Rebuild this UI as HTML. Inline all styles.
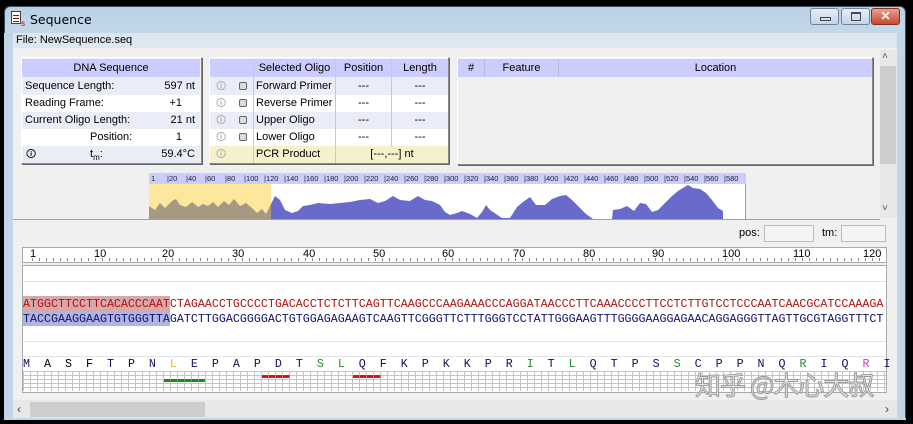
<!DOCTYPE html>
<html><head><meta charset="utf-8"><style>
*{margin:0;padding:0;box-sizing:border-box}
body{width:913px;height:424px;background:#000;position:relative;overflow:hidden;font-family:"Liberation Sans",Arial,sans-serif;font-size:11px;color:#000}
.a{position:absolute}
.win{left:4px;top:6px;width:902px;height:414px;background:linear-gradient(#b9d0e6,#c6d9ea 30px,#c3d6e8);border-radius:6px 6px 0 0;border:1px solid #3c4b5a}
.cell{position:absolute;white-space:nowrap;line-height:17px}
.hdr{background:#ccccff;color:#000;text-align:center;line-height:18px}
.mono{font-family:"Liberation Mono","Courier New",monospace;font-size:11.667px;white-space:pre}
.tb{position:absolute;top:8px;height:17px;border:1px solid #6f839a;border-radius:3px;background:linear-gradient(#e6eef7,#c4d4e6)}
</style></head><body>
<div class="a win"></div>
<div class="a" style="left:11px;top:11px;width:10px;height:13px;background:#fff;border:1px solid #444"></div>
<div class="a" style="left:13px;top:15px;width:6px;height:1px;background:#a00;box-shadow:0 3px 0 #a00,0 6px 0 #a00"></div>
<div class="a" style="left:21px;top:19px;font-size:8px;color:#c00">s</div>
<div class="a" style="left:30px;top:12px;font-size:12.5px;font-family:'DejaVu Sans',sans-serif">Sequence</div>
<div class="tb" style="left:810px;width:29px"><div class="a" style="left:9px;top:8px;width:11px;height:4px;border:1px solid #445"></div></div>
<div class="tb" style="left:841px;width:29px"><div class="a" style="left:9px;top:3px;width:10px;height:9px;border:1px solid #445;border-top-width:2px"></div></div>
<div class="tb" style="left:871px;width:29px;background:linear-gradient(#e8a090,#c84a30);border-color:#8a3020;color:#fff;text-align:center;font-weight:bold;font-size:12px;line-height:15px">✕</div>
<div class="a" style="left:13px;top:33px;width:884px;height:15px;background:#dde7ef"></div>
<div class="a" style="left:16px;top:34px;font-size:11px">File: NewSequence.seq</div>
<div class="a" style="left:13px;top:48px;width:884px;height:370px;background:#f0f0f0"></div>
<div class="a" style="left:897px;top:33px;width:8px;height:387px;background:#c3d6e8"></div>
<div class="a" style="left:4px;top:33px;width:9px;height:387px;background:#c3d6e8"></div>
<div class="a" style="left:4px;top:418px;width:902px;height:2px;background:#c3d6e8"></div>
<!-- DNA panel -->
<div class="a" style="left:21px;top:57px;width:181px;height:107px;border:1px solid #fff;border-right-color:#888;border-bottom-color:#888;box-shadow:1px 1px 0 #666"></div>
<div class="a hdr" style="left:22px;top:59px;width:178px;height:18px">DNA Sequence</div>
<div class="a" style="left:22px;top:78px;width:178px;height:17px;background:#e8edf7"></div>
<div class="a" style="left:22px;top:95px;width:178px;height:17px;background:#fff"></div>
<div class="a" style="left:22px;top:112px;width:178px;height:17px;background:#e8edf7"></div>
<div class="a" style="left:22px;top:129px;width:178px;height:17px;background:#fff"></div>
<div class="a" style="left:22px;top:146px;width:178px;height:17px;background:#e8edf7"></div>
<div class="cell" style="left:25px;top:78px">Sequence Length:</div><div class="cell" style="left:140px;top:78px;width:55px;text-align:right">597 nt</div>
<div class="cell" style="left:25px;top:95px">Reading Frame:</div><div class="cell" style="left:140px;top:95px;width:42px;text-align:right">+1</div>
<div class="cell" style="left:25px;top:112px">Current Oligo Length:</div><div class="cell" style="left:140px;top:112px;width:55px;text-align:right">21 nt</div>
<div class="cell" style="left:90px;top:129px">Position:</div><div class="cell" style="left:140px;top:129px;width:42px;text-align:right">1</div>
<div class="cell" style="left:26px;top:146px;font-size:10px">&#x1F6C8;</div>
<div class="cell" style="left:90px;top:146px">t<sub style="font-size:8px">m</sub>:</div><div class="cell" style="left:140px;top:146px;width:55px;text-align:right">59.4°C</div>
<!-- Oligo panel -->
<div class="a" style="left:209px;top:57px;width:240px;height:107px;border:1px solid #fff;border-right-color:#888;border-bottom-color:#888;box-shadow:1px 1px 0 #666"></div>
<div class="a hdr" style="left:210px;top:59px;width:238px;height:18px"></div>
<div class="a" style="left:210px;top:78px;width:238px;height:17px;background:#e8edf7"></div>
<div class="a" style="left:210px;top:95px;width:238px;height:17px;background:#fff"></div>
<div class="a" style="left:210px;top:112px;width:238px;height:17px;background:#e8edf7"></div>
<div class="a" style="left:210px;top:129px;width:238px;height:17px;background:#fff"></div>
<div class="a" style="left:210px;top:146px;width:238px;height:17px;background:#f7f0cc"></div>
<div class="a" style="left:253px;top:59px;width:1px;height:104px;background:#c8c8d8"></div>
<div class="a" style="left:335px;top:59px;width:1px;height:104px;background:#c8c8d8"></div>
<div class="a" style="left:391px;top:59px;width:1px;height:87px;background:#c8c8d8"></div>
<div class="cell hdr" style="left:254px;top:59px;width:81px;background:none">Selected Oligo</div>
<div class="cell hdr" style="left:336px;top:59px;width:55px;background:none">Position</div>
<div class="cell hdr" style="left:392px;top:59px;width:56px;background:none">Length</div>
<div class="cell" style="left:256px;top:78px">Forward Primer</div>
<div class="cell" style="left:256px;top:95px">Reverse Primer</div>
<div class="cell" style="left:256px;top:112px">Upper Oligo</div>
<div class="cell" style="left:256px;top:129px">Lower Oligo</div>
<div class="cell" style="left:256px;top:146px">PCR Product</div>
<div class="cell" style="left:336px;top:78px;width:55px;text-align:center">---<br>---<br>---<br>---</div>
<div class="cell" style="left:392px;top:78px;width:56px;text-align:center">---<br>---<br>---<br>---</div>
<div class="cell" style="left:336px;top:146px;width:112px;text-align:center">[---,---] nt</div>
<div class="cell" style="left:216px;top:78px;color:#aaa;font-size:10px;line-height:17px">&#x1F6C8;<br>&#x1F6C8;<br>&#x1F6C8;<br>&#x1F6C8;<br>&#x1F6C8;</div>
<div class="a" style="left:239px;top:82px;width:8px;height:8px;border:1px solid #666;border-radius:2px;background:#ddd"></div>
<div class="a" style="left:239px;top:99px;width:8px;height:8px;border:1px solid #666;border-radius:2px;background:#ddd"></div>
<div class="a" style="left:239px;top:116px;width:8px;height:8px;border:1px solid #666;border-radius:2px;background:#ddd"></div>
<div class="a" style="left:239px;top:133px;width:8px;height:8px;border:1px solid #666;border-radius:2px;background:#ddd"></div>
<!-- Features panel -->
<div class="a" style="left:457px;top:57px;width:416px;height:108px;border:1px solid #fff;border-right-color:#888;border-bottom-color:#888;box-shadow:1px 1px 0 #666"></div>
<div class="a hdr" style="left:458px;top:59px;width:414px;height:18px"></div>
<div class="a" style="left:484px;top:59px;width:1px;height:18px;background:#b8b8d8"></div>
<div class="a" style="left:558px;top:59px;width:1px;height:18px;background:#b8b8d8"></div>
<div class="cell hdr" style="left:458px;top:59px;width:26px;background:none">#</div>
<div class="cell hdr" style="left:485px;top:59px;width:73px;background:none">Feature</div>
<div class="cell hdr" style="left:559px;top:59px;width:313px;background:none">Location</div>
<!-- right scrollbar -->
<div class="a" style="left:880px;top:50px;width:17px;height:168px;background:#e8e8e8"></div>
<div class="a" style="left:880px;top:66px;width:16px;height:98px;background:#cdcdcd"></div>
<div class="a" style="left:882px;top:51px;font-size:10px;color:#555">&#x2C4;</div>
<div class="a" style="left:882px;top:203px;font-size:10px;color:#555">&#x2C5;</div>
<!-- graph -->
<div class="a" style="left:149px;top:173px;width:597px;height:11px;background:#ccccff;font-size:7.5px;line-height:11px;color:#223">
<span class="a" style="left:2px">1</span><span class="a" style="left:18px">|20</span><span class="a" style="left:37px">|40</span><span class="a" style="left:56px">|60</span><span class="a" style="left:76px">|80</span><span class="a" style="left:95px">|100</span><span class="a" style="left:115px">|120</span><span class="a" style="left:135px">|140</span><span class="a" style="left:155px">|160</span><span class="a" style="left:175px">|180</span><span class="a" style="left:195px">|200</span><span class="a" style="left:215px">|220</span><span class="a" style="left:235px">|240</span><span class="a" style="left:255px">|260</span><span class="a" style="left:275px">|280</span><span class="a" style="left:295px">|300</span><span class="a" style="left:315px">|320</span><span class="a" style="left:335px">|340</span><span class="a" style="left:355px">|360</span><span class="a" style="left:375px">|380</span><span class="a" style="left:395px">|400</span><span class="a" style="left:415px">|420</span><span class="a" style="left:435px">|440</span><span class="a" style="left:455px">|460</span><span class="a" style="left:475px">|480</span><span class="a" style="left:495px">|500</span><span class="a" style="left:515px">|520</span><span class="a" style="left:535px">|540</span><span class="a" style="left:555px">|560</span><span class="a" style="left:575px">|580</span></div>
<svg class="a" style="left:149px;top:184px" width="597" height="35" viewBox="149 184 597 35">
<rect x="149" y="184" width="596" height="35" fill="#fff"/>
<rect x="149" y="184" width="122" height="35" fill="#fde79c"/>
<polygon fill="#a69984" points="149,219 149,206 155,210 160,203 165,208 172,201 176,199 180,205 186,207 192,202 198,207 203,204 208,206 213,202 218,207 224,201 229,205 234,199 240,206 246,203 252,208 257,213 262,209 266,214 271,204 271,219"/>
<polygon fill="#6a6acc" points="271,219 271,204 275,196 280,200 285,210 292,213 298,211 303,206 310,205 318,203 330,204 340,203 350,202 360,200 370,199 378,203 385,201 393,196 400,200 410,201 418,196 425,200 432,201 440,205 445,212 450,215 457,213 462,211 470,214 477,218 482,212 486,205 490,210 496,214 502,218 510,218 517,207 523,202 530,197 536,205 545,205 552,199 560,196 566,195 572,200 580,208 586,214 593,219"/>
<polygon fill="#6a6acc" points="612,219 613,210 620,209 627,206 634,211 640,203 646,204 652,212 658,210 665,203 672,196 678,191 683,188 688,185 693,188 700,189 706,193 712,200 718,208 723,211 723,219"/>
<line x1="745.5" y1="184" x2="745.5" y2="219" stroke="#999"/>
</svg>
<div class="a" style="left:13px;top:219px;width:867px;height:1px;background:#a0a0a0"></div>
<!-- pos / tm -->
<div class="a" style="left:739px;top:227px;font-size:11px">pos:</div>
<div class="a" style="left:764px;top:225px;width:50px;height:17px;border:1px solid #bbb;background:#f4f4f4"></div>
<div class="a" style="left:822px;top:227px;font-size:11px">tm:</div>
<div class="a" style="left:841px;top:225px;width:45px;height:17px;border:1px solid #bbb;background:#f4f4f4"></div>
<!-- ruler -->
<div class="a" style="left:22px;top:247px;width:865px;height:16px;background:#fff;border:1px solid #aaa"></div>
<div class="a" style="left:22px;top:247px;width:865px;height:16px;background:repeating-linear-gradient(90deg,transparent 0 6px,#888 6px 7px) 4px 11px/860px 3px no-repeat"></div>
<div class="a" style="left:22px;top:248px;font-size:11px;line-height:12px;width:865px;height:14px">
<span class="a" style="left:8px">1</span><span class="a" style="left:72px">10</span><span class="a" style="left:140px">20</span><span class="a" style="left:210px">30</span><span class="a" style="left:281px">40</span><span class="a" style="left:351px">50</span><span class="a" style="left:420px">60</span><span class="a" style="left:491px">70</span><span class="a" style="left:561px">80</span><span class="a" style="left:630px">90</span><span class="a" style="left:700px">100</span><span class="a" style="left:771px">110</span><span class="a" style="left:841px">120</span></div>
<!-- sequence panel -->
<div class="a" style="left:22px;top:265px;width:865px;height:128px;background:#fff;border:1px solid #aaa"></div>
<div class="a" style="left:23px;top:281px;width:863px;height:1px;background:#e4e4e4"></div>
<div class="a" style="left:23px;top:341px;width:863px;height:1px;background:#e4e4e4"></div>
<div class="a" style="left:23px;top:356px;width:863px;height:1px;background:#e4e4e4"></div>
<div class="a" style="left:23px;top:296px;width:147px;height:15px;background:#d9a8a8"></div>
<div class="a" style="left:23px;top:311px;width:147px;height:15px;background:#b0b4e0"></div>
<div class="a mono" style="left:23px;top:297px;color:#b01010;line-height:14px">ATGGCTTCCTTCACACCCAATCTAGAACCTGCCCCTGACACCTCTCTTCAGTTCAAGCCCAAGAAACCCAGGATAACCCTTCAAACCCCTTCCTCTTGTCCTCCCAATCAACGCATCCAAAGA</div>
<div class="a mono" style="left:23px;top:312px;color:#101070;line-height:14px">TACCGAAGGAAGTGTGGGTTAGATCTTGGACGGGGACTGTGGAGAGAAGTCAAGTTCGGGTTCTTTGGGTCCTATTGGGAAGTTTGGGGAAGGAGAACAGGAGGGTTAGTTGCGTAGGTTTCT</div>
<div class="a mono" style="left:23px;top:357px;color:#101060;line-height:14px">M<span style="color:#000">  A  S  F  </span>T  P  N  <span style="color:#d8c040">L</span>  E  P  A  P  D  T  <span style="color:#2a8a2a">S  L</span>  Q  F  K  P  K  K  P  R  <span style="color:#2a8a2a">I</span>  T  <span style="color:#2a8a2a">L</span>  Q  T  P  S  <span style="color:#2a8a2a">S</span>  C  P  P  N  Q  <span style="color:#2a8a2a">R</span>  I  Q  <span style="color:#c040c0">R</span>  I</div>
<div class="a" style="left:23px;top:371px;width:863px;height:20px;background:repeating-linear-gradient(90deg,#c4c4c4 0 1px,transparent 1px 7px),repeating-linear-gradient(180deg,#c4c4c4 0 1px,transparent 1px 4px)"></div>
<div class="a" style="left:164px;top:379px;width:41px;height:3px;background:repeating-linear-gradient(90deg,#1a8a1a 0 6px,#5a5 6px 7px)"></div>
<div class="a" style="left:262px;top:375px;width:28px;height:3px;background:repeating-linear-gradient(90deg,#d01818 0 6px,#e66 6px 7px)"></div>
<div class="a" style="left:353px;top:375px;width:28px;height:3px;background:repeating-linear-gradient(90deg,#d01818 0 6px,#e66 6px 7px)"></div>
<!-- watermark -->
<div class="a" style="left:695px;top:366px;font-family:'Noto Sans CJK SC',sans-serif;font-size:26px;color:#e8e8e8;-webkit-text-stroke:1px #9a9a9a;white-space:nowrap;letter-spacing:-1px">知乎 @木心大叔</div>
<!-- bottom scrollbar -->
<div class="a" style="left:13px;top:400px;width:884px;height:18px;background:#e8e8e8"></div>
<div class="a" style="left:30px;top:402px;width:175px;height:15px;background:#cdcdcd"></div>
<div class="a" style="left:17px;top:402px;font-size:12px;color:#444">‹</div>
<div class="a" style="left:885px;top:402px;font-size:12px;color:#444">›</div>
</body></html>
